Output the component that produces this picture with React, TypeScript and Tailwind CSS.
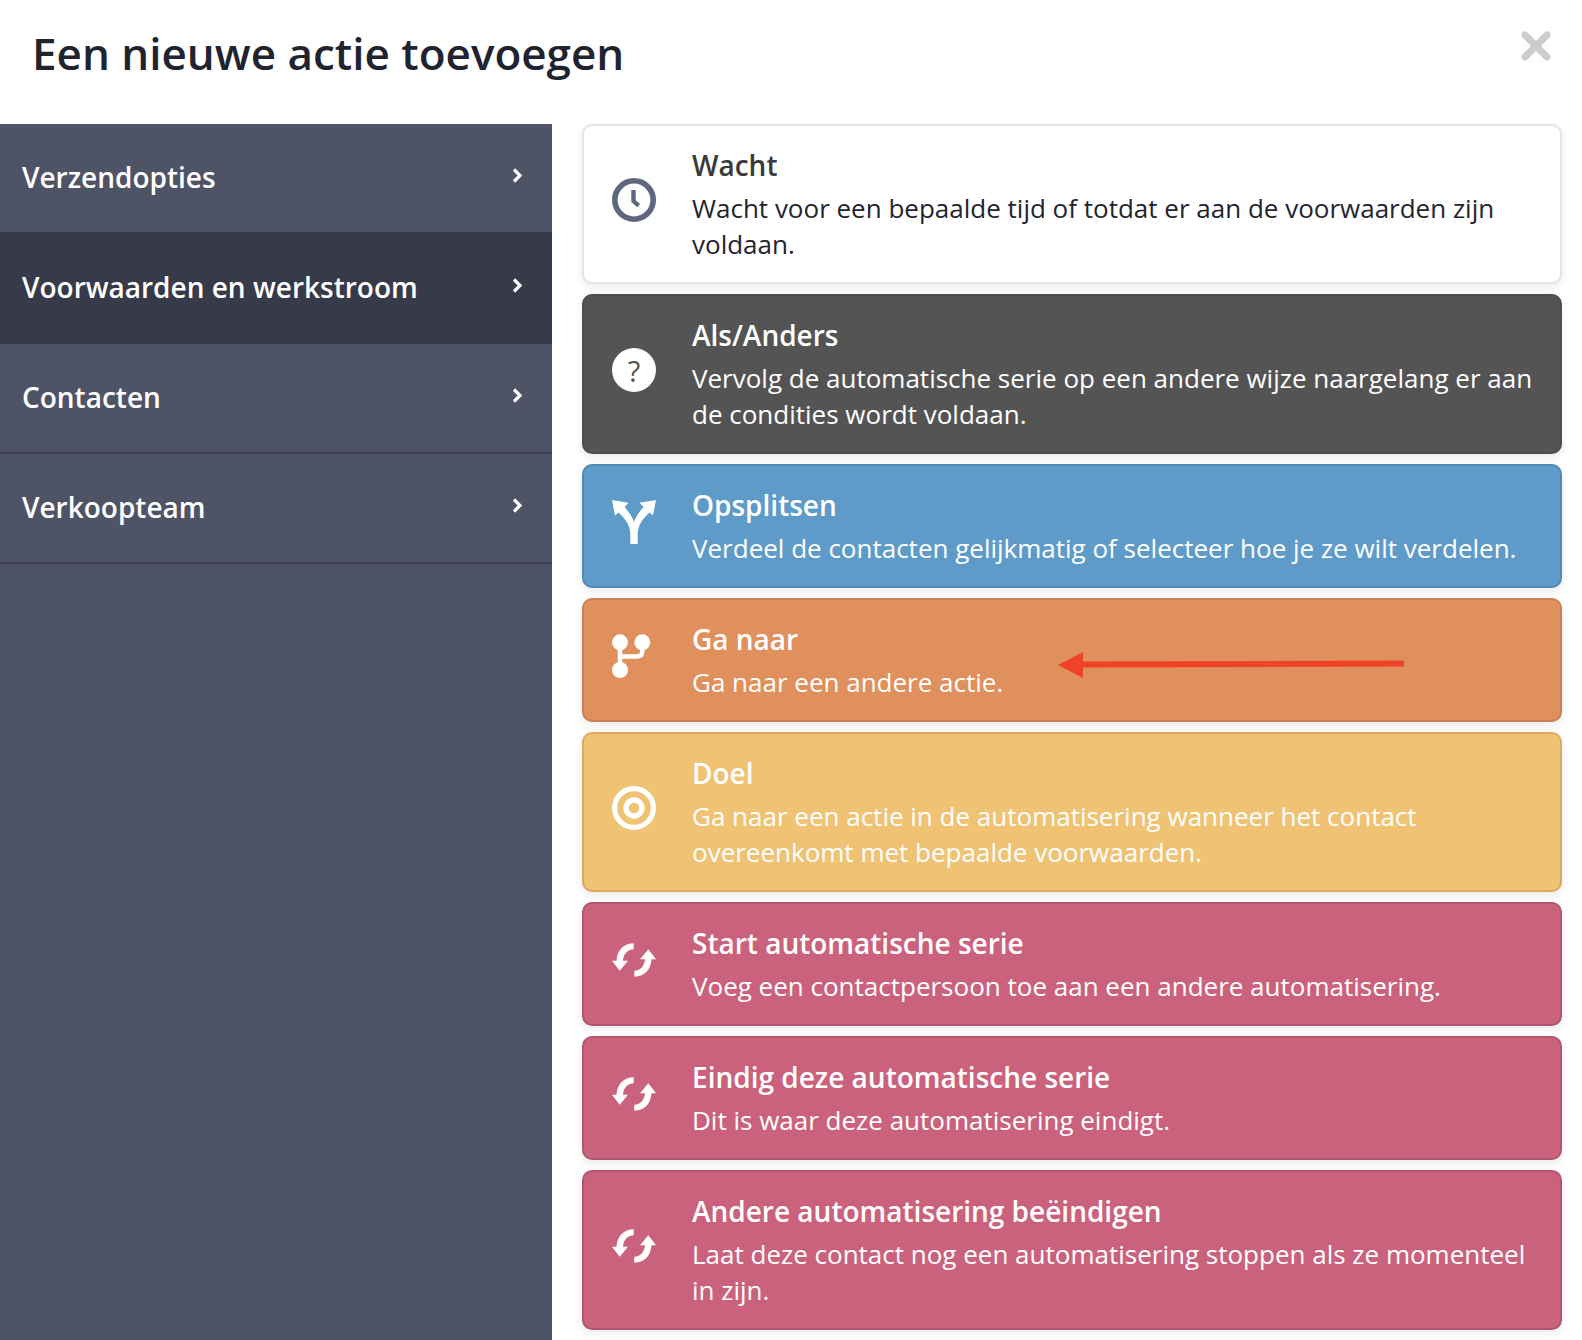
import type { ReactNode } from 'react'

function ClockIcon() {
  return (
    <svg width="44" height="44" viewBox="0 0 44 44" fill="none">
      <circle cx="22" cy="22" r="19.2" stroke="#5f6780" strokeWidth="5.6" />
      <path d="M19.3 12h4.4v10.3l4.4 3.7-2.8 3.2-6-5.2z" fill="#5f6780" />
    </svg>
  )
}

function QuestionIcon() {
  return (
    <div className="flex h-11 w-11 items-center justify-center rounded-full bg-white text-[29px] font-medium leading-none text-[#545454]">
      ?
    </div>
  )
}

function SplitIcon() {
  return (
    <svg width="44" height="44" viewBox="0 0 44 44" fill="#fff">
      <path d="M0 0L16.5 2.7 12.5 7C16.5 11.5 20 16 22 22 24 16 27.5 11.5 31.5 7L27.5 2.7 44 0 41 15.5 37.5 12.5C32 18 25.7 24 25.7 34V44H18.3V34C18.3 24 12 18 6.5 12.5L3 15.5Z" />
    </svg>
  )
}

function BranchIcon() {
  return (
    <svg width="44" height="44" viewBox="0 0 44 44" fill="none">
      <circle cx="8" cy="8.3" r="8" fill="#fff" />
      <circle cx="30.3" cy="8.3" r="8" fill="#fff" />
      <circle cx="8" cy="36" r="8" fill="#fff" />
      <path d="M8 8v28M30.3 8v9q0 5.5-5.5 5.5H8" stroke="#fff" strokeWidth="4.6" />
    </svg>
  )
}

function TargetIcon() {
  return (
    <svg width="44" height="44" viewBox="0 0 44 44" fill="none" stroke="#fff">
      <circle cx="22" cy="22" r="19.4" strokeWidth="5.2" />
      <circle cx="22" cy="22" r="8" strokeWidth="5.3" />
    </svg>
  )
}

function SyncIcon() {
  return (
    <svg width="44" height="44" viewBox="0 0 44 44" fill="#fff">
      <path d="M21.7 5.3C12 5.3 5 12 4.5 22.7H0L7.7 32.7 16 22.7H11C11.5 16 15.5 11.5 21.7 11.3Z" />
      <path d="M22.3 38.7C32 38.7 39 32 39.5 21.3H44L36.3 11.3 28 21.3H33C32.5 28 28.5 32.5 22.3 32.7Z" />
    </svg>
  )
}

function Chevron() {
  return (
    <svg width="10" height="15" viewBox="0 0 10 15" fill="none" className="-mt-1">
      <path d="M2 1.5l6 6-6 6" stroke="#fff" strokeWidth="3.2" />
    </svg>
  )
}

const menuItems = [
  { label: 'Verzendopties', className: 'h-[108px]' },
  { label: 'Voorwaarden en werkstroom', className: 'h-[112px] bg-[#373a49]' },
  { label: 'Contacten', className: 'h-[110px] border-b-2 border-[#3c3f4e]' },
  { label: 'Verkoopteam', className: 'h-[110px] border-b-2 border-[#3c3f4e]' },
]

type Action = {
  title: string
  text: string
  icon: ReactNode
  card: string
  titleColor?: string
  textColor?: string
  arrow?: boolean
}

const actions: Action[] = [
  {
    title: 'Wacht',
    text: 'Wacht voor een bepaalde tijd of totdat er aan de voorwaarden zijn voldaan.',
    icon: <ClockIcon />,
    card: 'bg-white border-[#e4e4e4]',
    titleColor: 'text-[#3a3a3a]',
    textColor: 'text-[#1f2430]',
  },
  {
    title: 'Als/Anders',
    text: 'Vervolg de automatische serie op een andere wijze naargelang er aan de condities wordt voldaan.',
    icon: <QuestionIcon />,
    card: 'bg-[#545454] border-[#4e4e4e]',
  },
  {
    title: 'Opsplitsen',
    text: 'Verdeel de contacten gelijkmatig of selecteer hoe je ze wilt verdelen.',
    icon: <SplitIcon />,
    card: 'bg-[#5e9bc9] border-[#5289b3]',
  },
  {
    title: 'Ga naar',
    text: 'Ga naar een andere actie.',
    icon: <BranchIcon />,
    card: 'bg-[#e0905c] border-[#c98055]',
    arrow: true,
  },
  {
    title: 'Doel',
    text: 'Ga naar een actie in de automatisering wanneer het contact overeenkomt met bepaalde voorwaarden.',
    icon: <TargetIcon />,
    card: 'bg-[#f0c274] border-[#d8aa63]',
  },
  {
    title: 'Start automatische serie',
    text: 'Voeg een contactpersoon toe aan een andere automatisering.',
    icon: <SyncIcon />,
    card: 'bg-[#cb627d] border-[#b0566f]',
  },
  {
    title: 'Eindig deze automatische serie',
    text: 'Dit is waar deze automatisering eindigt.',
    icon: <SyncIcon />,
    card: 'bg-[#cb627d] border-[#b0566f]',
  },
  {
    title: 'Andere automatisering beëindigen',
    text: 'Laat deze contact nog een automatisering stoppen als ze momenteel in zijn.',
    icon: <SyncIcon />,
    card: 'bg-[#cb627d] border-[#b0566f]',
  },
]

function ActionCard({ action }: { action: Action }) {
  return (
    <div
      className={`relative flex items-center rounded-[10px] border-2 py-5 pl-[28px] pr-[20px] shadow-[0_4px_10px_rgba(0,0,0,0.08)] ${action.card}`}
    >
      <div className="mb-2 w-11 shrink-0">{action.icon}</div>
      <div className="ml-[36px] min-w-0">
        <h3 className={`mt-px text-[28px] font-semibold leading-9 ${action.titleColor ?? 'text-white'}`}>
          {action.title}
        </h3>
        <p className={`mt-[7px] text-[26px] leading-9 ${action.textColor ?? 'text-white'}`}>
          {action.text}
        </p>
      </div>
      {action.arrow && (
        <svg
          width="346"
          height="26"
          viewBox="0 0 346 26"
          className="absolute left-[474px] top-[52px]"
        >
          <path d="M0 13L25 0V9.6L346 8.4V14.4L25 15.6V26Z" fill="#ee4327" />
        </svg>
      )}
    </div>
  )
}

export default function App() {
  return (
    <div className="flex h-[1340px] flex-col overflow-hidden bg-white font-['Open_Sans',sans-serif]">
      <header className="flex h-[124px] shrink-0 items-start justify-between pl-[32px] pr-[30px]">
        <h1 className="mt-[23px] text-[44px] font-semibold leading-[60px] text-[#1f2430]">
          Een nieuwe actie toevoegen
        </h1>
        <svg width="32" height="32" viewBox="0 0 32 32" className="mt-[30px]">
          <path d="M5 5l22 22M27 5L5 27" stroke="#cccccc" strokeWidth="7" strokeLinecap="round" />
        </svg>
      </header>
      <div className="flex min-h-0 flex-1">
        <nav className="w-[552px] shrink-0 bg-[#4f5366]">
          {menuItems.map((item) => (
            <div
              key={item.label}
              className={`flex items-center justify-between pb-[2px] pl-[22px] pr-[30px] text-[28px] font-semibold text-white ${item.className}`}
            >
              <span>{item.label}</span>
              <Chevron />
            </div>
          ))}
        </nav>
        <main className="flex flex-1 flex-col gap-[10px] pl-[30px] pr-[20px]">
          {actions.map((action) => (
            <ActionCard key={action.title} action={action} />
          ))}
        </main>
      </div>
    </div>
  )
}
